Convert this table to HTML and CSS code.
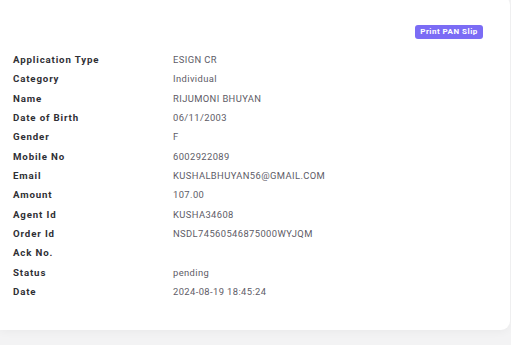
FILE: index.html
```html
<!DOCTYPE html>
<html lang="en">
<head>
<meta charset="utf-8">
<title>PAN Application Details</title>
<link rel="stylesheet" href="styles.css">
</head>
<body>
<main class="card">
  <div class="card-actions">
    <button class="btn-print" type="button">Print PAN Slip</button>
  </div>
  <dl class="details">
    <dt>Application Type</dt><dd>ESIGN CR</dd>
    <dt>Category</dt><dd>Individual</dd>
    <dt>Name</dt><dd>RIJUMONI BHUYAN</dd>
    <dt>Date of Birth</dt><dd>06/11/2003</dd>
    <dt>Gender</dt><dd>F</dd>
    <dt>Mobile No</dt><dd>6002922089</dd>
    <dt>Email</dt><dd>KUSHALBHUYAN56@GMAIL.COM</dd>
    <dt>Amount</dt><dd>107.00</dd>
    <dt>Agent Id</dt><dd>KUSHA34608</dd>
    <dt>Order Id</dt><dd>NSDL74560546875000WYJQM</dd>
    <dt>Ack No.</dt><dd></dd>
    <dt>Status</dt><dd>pending</dd>
    <dt>Date</dt><dd>2024-08-19 18:45:24</dd>
  </dl>
</main>
</body>
</html>
```

FILE: styles.css
```css
html, body {
  margin: 0;
  padding: 0;
}

body {
  background: #f3f3f4;
  font-family: Roboto, "Liberation Sans", sans-serif;
  width: 511px;
  height: 345px;
  overflow: hidden;
}

.card {
  display: block;
  width: 510px;
  margin-top: -4px;
  padding: 29px 0 29px 0;
  box-sizing: border-box;
  background: #ffffff;
  border-radius: 0 9px 9px 0;
  box-shadow: 0 2px 8px rgba(0, 0, 0, 0.04);
}

.card-actions {
  display: flex;
  justify-content: flex-end;
  padding-right: 27px;
}

.btn-print {
  height: 14px;
  width: 68px;
  padding: 0;
  border: none;
  border-radius: 3px;
  background: #7b6cf5;
  color: #ffffff;
  font-family: Roboto, "Liberation Sans", sans-serif;
  font-size: 8px;
  font-weight: 700;
  letter-spacing: 0.5px;
  line-height: 14px;
}

.details {
  display: grid;
  grid-template-columns: 160px 1fr;
  grid-auto-rows: 19.33px;
  align-items: center;
  margin: 11px 0 0 0;
  padding-left: 13px;
}

.details dt {
  margin: 0;
  font-size: 9.7px;
  font-weight: 700;
  letter-spacing: 0.85px;
  color: #2f2f35;
}

.details dd {
  margin: 0;
  font-size: 9.4px;
  font-weight: 400;
  letter-spacing: 0.4px;
  color: #5d5b66;
}
```
